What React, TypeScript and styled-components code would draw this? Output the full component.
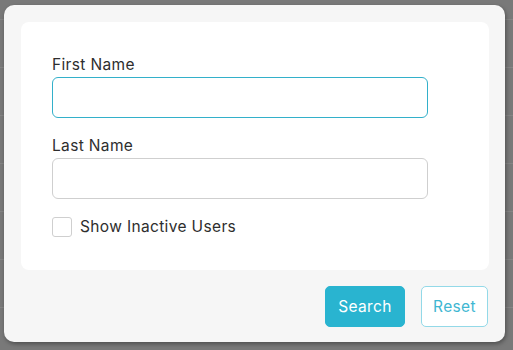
import React from "react";
import styled, { createGlobalStyle } from "styled-components";

const GlobalStyle = createGlobalStyle`
  html, body { margin: 0; padding: 0; background: #7a7a7a; }
  body { font-family: Inter, "Noto Sans", sans-serif; }
  * { box-sizing: border-box; }
`;

const Backdrop = styled.div`
  position: relative;
  width: 513px;
  height: 350px;
  overflow: hidden;
  background-color: #797979;
  background-image: repeating-linear-gradient(
    to bottom,
    transparent 0px,
    transparent 19px,
    #858585 19px,
    #858585 20px,
    transparent 20px,
    transparent 48px
  );
`;

const Modal = styled.div`
  position: absolute;
  left: 4px;
  top: 5px;
  width: 501px;
  height: 337px;
  background: #f6f6f6;
  border-radius: 10px;
  box-shadow: 1px 2px 4px rgba(0, 0, 0, 0.35);
  padding: 17px 16px 16px 17px;
  display: flex;
  flex-direction: column;
`;

const Card = styled.div`
  background: #ffffff;
  border-radius: 8px;
  padding: 32px 61px 33px 31px;
  display: flex;
  flex-direction: column;
`;

const Field = styled.div<{ $gap?: number }>`
  display: flex;
  flex-direction: column;
  margin-top: ${(p) => p.$gap ?? 0}px;
`;

const Label = styled.label`
  font-size: 15.5px;
  line-height: 22px;
  font-weight: 400;
  color: #2e2e2e;
  letter-spacing: 0.35px;
  margin-bottom: 1px;
`;

const Input = styled.input<{ $focused?: boolean }>`
  width: 376px;
  height: 41px;
  border: 1px solid ${(p) => (p.$focused ? "#33b0ca" : "#cfcfcf")};
  border-radius: 6px;
  background: #fff;
  outline: none;
  padding: 0 12px;
  font-family: inherit;
  font-size: 15px;
`;

const CheckRow = styled.label`
  display: flex;
  align-items: center;
  gap: 8px;
  margin-top: 18px;
  font-size: 15.5px;
  font-weight: 400;
  color: #2e2e2e;
  letter-spacing: 0.35px;
  line-height: 20px;
`;

const Box = styled.span`
  width: 20px;
  height: 20px;
  border: 1px solid #cfcfcf;
  border-radius: 3px;
  background: #fff;
  flex: none;
`;

const Footer = styled.div`
  display: flex;
  justify-content: flex-end;
  gap: 16px;
  margin-top: 16px;
  padding-right: 1px;
`;

const Button = styled.button<{ $primary?: boolean }>`
  height: 41px;
  width: ${(p) => (p.$primary ? 80 : 67)}px;
  padding: 0;
  border-radius: 5px;
  font-family: inherit;
  font-size: 15.5px;
  font-weight: 400;
  letter-spacing: 0.35px;
  cursor: pointer;
  border: 1px solid ${(p) => (p.$primary ? "#29b4d0" : "#93d9e8")};
  background: ${(p) => (p.$primary ? "#29b4d0" : "#ffffff")};
  color: ${(p) => (p.$primary ? "#ffffff" : "#3fb7d2")};
`;

export default function App() {
  return (
    <>
      <GlobalStyle />
      <Backdrop>
        <Modal>
          <Card>
            <Field>
              <Label>First Name</Label>
              <Input $focused />
            </Field>
            <Field $gap={17}>
              <Label>Last Name</Label>
              <Input />
            </Field>
            <CheckRow>
              <Box />
              Show Inactive Users
            </CheckRow>
          </Card>
          <Footer>
            <Button $primary>Search</Button>
            <Button>Reset</Button>
          </Footer>
        </Modal>
      </Backdrop>
    </>
  );
}
